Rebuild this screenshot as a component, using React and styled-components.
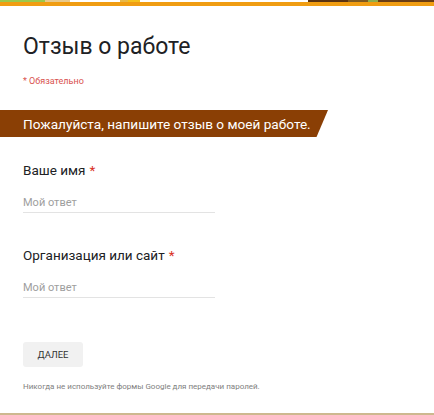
import React from "react";
import styled, { createGlobalStyle } from "styled-components";

const Global = createGlobalStyle`
  html, body { margin: 0; padding: 0; background: #fff; }
  body { font-family: Roboto, "Noto Sans", Arial, sans-serif; overflow: hidden; }
`;

const Page = styled.div`
  width: 434px;
  height: 415px;
  display: flex;
  flex-direction: column;
  position: relative;
  overflow: hidden;
  border-bottom: 2px solid #cdb88f;
  box-sizing: border-box;
`;

const HeaderStrip = styled.div`
  height: 2px;
  display: flex;
`;

const StripPiece = styled.div`
  flex: ${(p) => p.$w} 0 0;
  background: ${(p) => p.$c};
`;

const OrangeBar = styled.div`
  height: 4px;
  background: #f09d12;
`;

const Title = styled.h1`
  margin: 26px 0 0 23px;
  font-size: 23px;
  font-weight: 400;
  color: #202124;
  line-height: 30px;
`;

const Required = styled.div`
  margin: 13px 0 0 23px;
  font-size: 9px;
  color: #d9534f;
  line-height: 12px;
`;

const Banner = styled.div`
  margin-top: 23px;
  width: 328px;
  height: 27px;
  background: #8a3f05;
  clip-path: polygon(0 0, 100% 0, 96.5% 100%, 0 100%);
  display: flex;
  align-items: center;
  padding-left: 23px;
  box-sizing: border-box;
  color: #fff;
  font-size: 13.6px;
  white-space: nowrap;
`;

const Question = styled.div`
  margin: ${(p) => p.$top}px 0 0 23px;
  display: flex;
  flex-direction: column;
`;

const Label = styled.div`
  font-size: 13.5px;
  color: #202124;
  line-height: 18px;
`;

const Star = styled.span`
  color: #d93025;
  margin-left: 4px;
`;

const Answer = styled.div`
  margin-top: 17px;
  width: 192px;
  border-bottom: 1px solid #e3e3e3;
  font-size: 11px;
  color: #9e9e9e;
  line-height: 14px;
  padding-bottom: 2px;
`;

const Button = styled.button`
  margin: 44px 0 0 23px;
  width: 60px;
  height: 25px;
  background: #f1f1f1;
  border: none;
  border-radius: 3px;
  font-family: Roboto, "Noto Sans", Arial, sans-serif;
  font-size: 9.5px;
  font-weight: 400;
  color: #333;
  padding: 0;
`;

const Footer = styled.div`
  margin: 15px 0 0 23px;
  font-size: 8px;
  color: #808080;
  line-height: 10px;
`;

const strip = [
  ["#9cc84b", 45],
  ["#e9c98a", 25],
  ["#ffffff", 50],
  ["#e8b847", 8],
  ["#f5c11c", 12],
  ["#ffffff", 168],
  ["#5b3310", 40],
  ["#7f5a20", 20],
  ["#8fae4c", 10],
  ["#6b3d12", 56],
];

export default function App() {
  return (
    <>
      <Global />
      <Page>
        <HeaderStrip>
          {strip.map(([c, w], i) => (
            <StripPiece key={i} $c={c} $w={w} />
          ))}
        </HeaderStrip>
        <OrangeBar />
        <Title>Отзыв о работе</Title>
        <Required>* Обязательно</Required>
        <Banner>Пожалуйста, напишите отзыв о моей работе.</Banner>
        <Question $top={24}>
          <Label>
            Ваше имя<Star>*</Star>
          </Label>
          <Answer>Мой ответ</Answer>
        </Question>
        <Question $top={33}>
          <Label>
            Организация или сайт<Star>*</Star>
          </Label>
          <Answer>Мой ответ</Answer>
        </Question>
        <Button>ДАЛЕЕ</Button>
        <Footer>Никогда не используйте формы Google для передачи паролей.</Footer>
      </Page>
    </>
  );
}
